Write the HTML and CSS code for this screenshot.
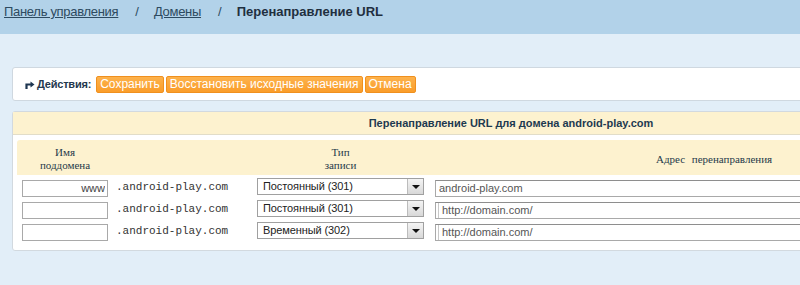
FILE: index.html
```html
<!DOCTYPE html>
<html lang="ru">
<head>
  <meta charset="UTF-8" />
  <title>Перенаправление URL</title>
  <link rel="stylesheet" href="styles.css">
</head>
<body>
  <div class="page">
    <div class="top-bar">
      <a href="#" class="crumb">Панель управления</a>
      <span class="sep">/</span>
      <a href="#" class="crumb">Домены</a>
      <span class="sep">/</span>
      <span class="current">Перенаправление URL</span>
    </div>

    <div class="actions">
      <svg class="act-icon" width="10" height="8" viewBox="0 0 10 8">
        <path d="M1.5 8 V3.5 H6" fill="none" stroke="#1d3550" stroke-width="2.2"/>
        <path d="M5.5 0.5 L9.5 3.5 L5.5 6.5 Z" fill="#1d3550"/>
      </svg>
      <span class="act-label">Действия:</span>
      <button class="btn">Сохранить</button>
      <button class="btn">Восстановить исходные значения</button>
      <button class="btn">Отмена</button>
    </div>

    <div class="panel">
      <div class="panel-title">Перенаправление URL для домена android-play.com</div>
      <div class="panel-body">
        <div class="grid">
          <div class="head head-first">Имя<br>поддомена</div>
          <div class="head"></div>
          <div class="head">Тип<br>записи</div>
          <div class="head head-addr">Адрес перенаправления</div>

          <div class="cell"><input class="sub" type="text" value="www"></div>
          <div class="cell domain">.android-play.com</div>
          <div class="cell">
            <div class="select"><span class="sel-text">Постоянный (301)</span><span class="sel-arrow"></span></div>
          </div>
          <div class="cell"><input class="addr" type="text" value="android-play.com"></div>

          <div class="cell"><input class="sub" type="text" value=""></div>
          <div class="cell domain">.android-play.com</div>
          <div class="cell">
            <div class="select"><span class="sel-text">Постоянный (301)</span><span class="sel-arrow"></span></div>
          </div>
          <div class="cell"><input class="addr hint" type="text" value="http://domain.com/"></div>

          <div class="cell"><input class="sub" type="text" value=""></div>
          <div class="cell domain">.android-play.com</div>
          <div class="cell">
            <div class="select"><span class="sel-text">Временный (302)</span><span class="sel-arrow"></span></div>
          </div>
          <div class="cell"><input class="addr hint" type="text" value="http://domain.com/"></div>
        </div>
      </div>
    </div>
  </div>
</body>
</html>
```

FILE: styles.css
```css
body {
  margin: 0;
  padding: 0;
  background: #e2eef8;
  font-family: 'Liberation Sans', Arial, sans-serif;
  overflow: hidden;
}

.page {
  width: 1020px;
}

.top-bar {
  height: 34px;
  background: #b2d2e9;
  display: flex;
  align-items: flex-start;
  padding: 4px 0 0 4px;
  box-sizing: border-box;
  font-size: 13px;
  color: #2d4a60;
}

.crumb {
  color: #2d4a60;
  text-decoration: underline;
  letter-spacing: -0.3px;
}

.sep {
  margin: 0 15px 0 17px;
  color: #2d4a60;
}

.current {
  font-weight: bold;
  color: #1f2f3f;
}

.actions {
  margin: 33px 0 0 12px;
  width: 996px;
  height: 34px;
  box-sizing: border-box;
  background: #fff;
  border: 1px solid #cfd8e0;
  border-radius: 3px;
  display: flex;
  align-items: center;
  padding-left: 12px;
}

.act-icon {
  margin-right: 2px;
  margin-top: 1px;
}

.act-label {
  font-size: 11px;
  font-weight: bold;
  color: #24384e;
  margin-right: 5px;
  letter-spacing: -0.2px;
}

.btn {
  font-family: 'Liberation Sans', Arial, sans-serif;
  font-size: 12px;
  color: #fff;
  height: 17px;
  padding: 0 3px;
  margin-right: 2px;
  border: 1px solid #f0901e;
  border-radius: 2px;
  background: linear-gradient(#fdb24c, #fa9d2a);
  cursor: pointer;
  line-height: 14px;
}

.panel {
  margin: 10px 0 0 12px;
  width: 996px;
  background: #fff;
  border: 1px solid #d2d9df;
  border-radius: 3px;
}

.panel-title {
  height: 22px;
  line-height: 22px;
  background: #fdf2cf;
  border-bottom: 1px solid #e2ddc8;
  text-align: center;
  font-size: 11px;
  font-weight: bold;
  color: #1d3a50;
}

.panel-body {
  padding: 5px 4px 6px 4px;
}

.grid {
  display: grid;
  grid-template-columns: 96px 139px 177px 1fr;
  grid-template-rows: 38px repeat(3, 22px);
}

.head {
  height: 35px;
  box-sizing: border-box;
  padding-top: 3px;
  background: #fdf2cf;
  font-family: 'Liberation Serif', 'Times New Roman', serif;
  font-size: 11px;
  line-height: 13px;
  color: #1f3a4a;
  display: flex;
  align-items: center;
  justify-content: center;
  text-align: center;
}

.head-first {
  border-radius: 3px 0 0 0;
}

.head-addr {
  justify-content: flex-start;
  padding-left: 227px;
  word-spacing: 4px;
}

.cell {
  padding-left: 5px;
}

.sub {
  width: 86px;
  height: 17px;
  box-sizing: border-box;
  border: 1px solid #a9a9a9;
  font-family: 'Liberation Sans', Arial, sans-serif;
  font-size: 11px;
  color: #444;
  text-align: right;
  padding: 0 2px;
  margin: 0;
}

.domain {
  padding-left: 3px;
  font-family: 'Liberation Mono', 'Courier New', monospace;
  font-size: 11px;
  line-height: 18px;
  color: #333;
}

.select {
  width: 167px;
  height: 17px;
  box-sizing: border-box;
  border: 1px solid #a0a0a0;
  display: flex;
  font-size: 11px;
  letter-spacing: -0.1px;
  color: #222;
  background: #fff;
}

.sel-text {
  flex: 1;
  padding-left: 5px;
  line-height: 15px;
}

.sel-arrow {
  width: 15px;
  border-left: 1px solid #bcbcbc;
  background: linear-gradient(#f4f4f4, #d8d8d8);
  display: flex;
  align-items: center;
  justify-content: center;
}

.sel-arrow::after {
  content: '';
  border-left: 4px solid transparent;
  border-right: 4px solid transparent;
  border-top: 4px solid #111;
}

.addr {
  margin: 0 0 0 1px;
  width: 550px;
  height: 17px;
  box-sizing: border-box;
  border: 1px solid #a9a9a9;
  border-top-color: #8e8e8e;
  font-family: 'Liberation Sans', Arial, sans-serif;
  font-size: 11px;
  color: #555;
  padding: 0 3px;
}

.hint {
  box-shadow: inset 2px 0 0 #fff, inset 3px 0 0 #c8c8c8;
  padding-left: 6px;
}
```
